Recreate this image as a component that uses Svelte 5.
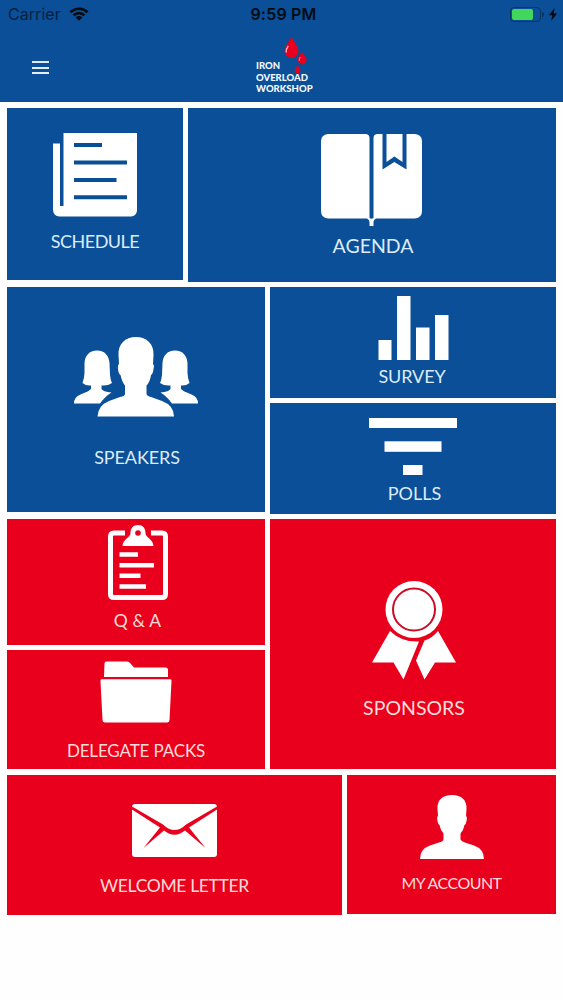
<script lang="ts">
  let carrier = 'Carrier';
  let time = '9:59 PM';
  let battery = 78;
</script>

<div class="screen">
  <header>
    <div class="status">
      <div class="carrier">
        <span>{carrier}</span>
        <svg width="20" height="14" viewBox="0 0 20 14" fill="none" stroke="#050b12" stroke-width="2.6">
          <path d="M1.4 5.2A12.4 12.4 0 0 1 18.6 5.2" />
          <path d="M4.6 8.3A7.8 7.8 0 0 1 15.4 8.3" />
          <path d="M10 13.8L6.6 10.4A4.9 4.9 0 0 1 13.4 10.4Z" fill="#050b12" stroke="none" />
        </svg>
      </div>
      <div class="time">{time}</div>
      <div class="power">
        <div class="battery"><div class="level" style="width: {battery}%"></div></div>
        <div class="cap"></div>
        <svg width="8" height="13" viewBox="0 0 8 13">
          <path d="M5.6 0L0 7.2h3.3L2.2 13L8 5.4H4.7Z" fill="#050b12" />
        </svg>
      </div>
    </div>

    <div class="nav">
      <button class="menu" aria-label="Menu">
        <span></span>
        <span></span>
        <span></span>
      </button>
      <div class="logo">
        <svg width="24" height="38" viewBox="0 0 24 38">
          <g fill="#e6001f">
            <path d="M8.500 0C9.500 4.500 15.500 10 15.500 15A7 7 0 0 1 1.500 15C1.500 10 7.500 4.500 8.500 0Z" />
            <path d="M18.800 15.500C19.600 18 23.600 20 23.600 24A4.400 4.400 0 0 1 14.800 24C14.800 20.500 18.200 18 18.800 15.500Z" />
            <path d="M14.500 28.500C15 30.500 17.400 32 17.400 34.300A2.800 2.800 0 0 1 11.800 34.300C11.800 32 14.200 30.500 14.500 28.500Z" />
          </g>
          <path d="M5 10.500Q2.900 13.200 3.200 16" fill="none" stroke="#ffb9bd" stroke-width="1.300" stroke-linecap="round" />
          <path d="M17 21.500Q16.100 23 16.300 24.600" fill="none" stroke="#ff9ba2" stroke-width="0.900" stroke-linecap="round" />
        </svg>
        <p>IRON<br />OVERLOAD<br />WORKSHOP</p>
      </div>
    </div>
  </header>

  <main>
    <div class="row first">
      <a class="tile schedule" href="#schedule">
        <svg width="84" height="84" viewBox="0 0 84 84">
          <path d="M10.500 0H84V77.500Q83.500 83 78 83.500H6.500Q0.500 83 0 77V10.500H7V73H10.500Z" fill="#fff" />
          <path d="M21 12H49M21 29.500H74M21 47H63.500M21 64.300H74" stroke="#0a4f96" stroke-width="4" />
        </svg>
        <span>SCHEDULE</span>
      </a>
      <a class="tile agenda" href="#agenda">
        <svg width="101" height="92" viewBox="0 0 101 92" fill="#fff">
          <path d="M7 0H45Q48.500 0.500 48.500 4V84Q50.500 85.500 52.500 84V4Q52.500 0.500 56 0H61.500V35.500L73.300 28L85.500 35.500V0H94Q101 1 101 7V77Q101 84 94 84.500H55Q52.500 85.500 52.500 88V92H48.500V88Q48.500 85.500 46 84.500H7Q0 84 0 77V7Q0 1 7 0Z" />
          <path d="M65.500 0H81.500V28L73.400 22.500L65.500 28Z" />
        </svg>
        <span>AGENDA</span>
      </a>
    </div>

    <div class="row second">
      <a class="tile speakers" href="#speakers">
        <svg width="124" height="80" viewBox="0 0 124 80" fill="#fff">
          <path d="M62 0C73 0 80 7 79.500 18L79 27Q80.500 28 79.500 32Q79 37 77 38Q76 45 72.500 48.500V57Q73 59 77 60L88 64Q100 68.500 100 79.500H23.500Q24 68.500 35 64L46 60Q51 59 51 57V48.500Q48 45 46.500 38Q44.500 37 44 32Q43.500 28 45 27L44.500 18C44 7 51 0 62 0Z" />
          <g id="side">
            <path d="M23 13.500C31 13.500 35 19 35.500 26L36 38Q36.500 43 38 46Q34 49 27.500 48.500V52Q29 54.500 37.500 55.500Q31 59.500 26 66.500H0Q0 60 6.500 57.500Q15.500 54 17 52V48.500Q12 49 8.500 46Q10.300 41 10.500 36V26C11 19 15 13.500 23 13.500Z" />
          </g>
          <use href="#side" transform="translate(124 0) scale(-1 1)" />
        </svg>
        <span>SPEAKERS</span>
      </a>
      <div class="stack">
        <a class="tile survey" href="#survey">
          <svg width="71" height="64" viewBox="0 0 71 64" fill="#fff">
            <rect x="0.500" y="44" width="13" height="20" />
            <rect x="19" y="0" width="13.500" height="64" />
            <rect x="38" y="31.500" width="13.500" height="32.500" />
            <rect x="57" y="19" width="13.500" height="45" />
          </svg>
          <span>SURVEY</span>
        </a>
        <a class="tile polls" href="#polls">
          <svg width="88" height="57" viewBox="0 0 88 57" fill="#fff">
            <rect x="0" y="0" width="88" height="10" />
            <rect x="15.500" y="23.300" width="57" height="10.500" />
            <rect x="34" y="47" width="19.500" height="10" />
          </svg>
          <span>POLLS</span>
        </a>
      </div>
    </div>

    <div class="row third">
      <div class="stack">
        <a class="tile questions" href="#questions">
          <svg width="60" height="75" viewBox="0 0 60 75">
            <path d="M17 8H6Q2.500 8 2.500 11.500V69Q2.500 72.500 6 72.500H54Q57.500 72.500 57.500 69V11.500Q57.500 8 54 8H43" fill="none" stroke="#fff" stroke-width="5" />
            <path d="M30 0C35 0 37.500 3.500 37.500 8C37.500 13 45 13.500 45.500 21H14.500C15 13.500 22.500 13 22.500 8C22.500 3.500 25 0 30 0Z" fill="#fff" />
            <circle cx="30" cy="8" r="2.800" fill="#e9001d" />
            <path d="M11.500 29.500H30M11.500 40.200H46M11.500 50.800H32.500M11.500 61.500H38" stroke="#fff" stroke-width="4.600" />
          </svg>
          <span>Q &amp; A</span>
        </a>
        <a class="tile packs" href="#packs">
          <svg width="72" height="62" viewBox="0 0 72 62" fill="#fff">
            <path d="M6.500 0.500H27Q29 0.500 30 2L34 6.500H66Q68 6.500 68 9V16H4L4.500 2.500Q4.500 0.500 6.500 0.500Z" />
            <path d="M1.500 18.300H70.500Q71.700 18.300 71.500 20L69.500 59Q69.300 61.500 67 61.500H5Q2.700 61.500 2.500 59L0.500 20Q0.300 18.300 1.500 18.300Z" />
          </svg>
          <span>DELEGATE PACKS</span>
        </a>
      </div>
      <a class="tile sponsors" href="#sponsors">
        <svg width="84" height="99" viewBox="0 0 84 99" fill="#fff">
          <path d="M18 50Q30 61.500 47 60.500L31.500 98.500L21.500 81.500H0Z" />
          <path d="M52.500 59.500Q60 57.500 66 50L84 81.500H63L52.500 98.500L44 79.500Z" />
          <circle cx="42" cy="28.500" r="28.500" />
          <circle cx="42" cy="28.500" r="21" fill="none" stroke="#d00a25" stroke-width="2" />
        </svg>
        <span>SPONSORS</span>
      </a>
    </div>

    <div class="row fourth">
      <a class="tile welcome" href="#welcome">
        <svg width="85" height="53" viewBox="0 0 85 53">
          <rect width="85" height="53" rx="3" fill="#fff" />
          <path d="M0 2.500L31 20.500Q42.500 31.500 54 20.500L85 2.500V5.500L57 23.500L73.500 44L53 26.500Q42.500 35 32 26.500L11.500 44L28 23.500L0 5.500Z" fill="#e9001d" />
        </svg>
        <span>WELCOME LETTER</span>
      </a>
      <a class="tile account" href="#account">
        <svg width="64" height="64" viewBox="0 0 64 64" fill="#fff">
          <path d="M32 0C41.500 0 47 5 46.500 14L46 21Q47.500 22 46.500 26Q46 29.500 44.500 30Q43.500 35.500 40.500 38.500V44.500Q41.500 46.500 45 47.500L54 50.500Q64 54 64 64H0Q0 54 10 50.500L19 47.500Q23 46.500 23.500 44.500V38.500Q20.500 35.500 19.500 30Q18 29.500 17.500 26Q16.500 22 18 21L17.500 14C17 5 22.500 0 32 0Z" />
        </svg>
        <span>MY ACCOUNT</span>
      </a>
    </div>
  </main>
</div>

<style>
  :global(body) {
    background: #fff;
  }

  .screen {
    width: 563px;
    height: 1000px;
    overflow: hidden;
    background: #fefefe;
  }

  header {
    height: 101.5px;
    background: #0a4f97;
  }

  .status {
    display: grid;
    grid-template-columns: 1fr auto 1fr;
    align-items: center;
    height: 28px;
    padding: 0 6px 0 8px;
    font-family: Inter, 'Liberation Sans', sans-serif;
    color: #050b12;
  }

  .carrier {
    display: flex;
    align-items: center;
    gap: 8px;
    font-size: 16px;
    letter-spacing: 0.05px;
    color: #07203d;
  }

  .time {
    padding-left: 2px;
    font-size: 16px;
    font-weight: 600;
    letter-spacing: 0.2px;
  }

  .power {
    display: flex;
    align-items: center;
    justify-content: flex-end;
  }

  .battery {
    box-sizing: border-box;
    width: 31px;
    height: 15px;
    padding: 1px;
    border: 1px solid #083565;
    border-radius: 4px;
  }

  .level {
    height: 100%;
    border-radius: 2px;
    background: #42d65b;
  }

  .cap {
    width: 2px;
    height: 5px;
    margin: 0 5px 0 1px;
    border-radius: 0 2px 2px 0;
    background: #083565;
  }

  .nav {
    display: grid;
    grid-template-columns: 256px 1fr;
    height: 73px;
  }

  .menu {
    display: flex;
    flex-direction: column;
    align-self: start;
    gap: 3.5px;
    width: 17px;
    margin: 33px 0 0 32px;
    padding: 0;
    border: 0;
    background: none;
  }

  .menu span {
    height: 2px;
    background: #e3edf7;
  }

  .logo {
    padding-top: 8px;
  }

  .logo svg {
    display: block;
    margin-left: 27px;
  }

  .logo p {
    margin: -14px 0 0;
    font-family: Lato, sans-serif;
    font-size: 9.5px;
    font-weight: 900;
    line-height: 11.5px;
    color: #f4f8fd;
  }

  main {
    display: flex;
    flex-direction: column;
    gap: 5.5px;
    padding: 6px 7px 0;
  }

  .row {
    display: flex;
    gap: 5px;
  }

  .stack {
    display: flex;
    flex-direction: column;
    gap: 4.5px;
  }

  .tile {
    box-sizing: border-box;
    display: flex;
    flex-direction: column;
    align-items: center;
    background: #0a4f97;
    color: #dcecfb;
    font-family: Lato, sans-serif;
    font-size: 18px;
    line-height: 20px;
    text-decoration: none;
    white-space: nowrap;
  }

  .tile svg {
    display: block;
    flex: none;
  }

  .third .tile,
  .fourth .tile {
    background: #e9001d;
    color: #ffdcd8;
  }

  .first {
    height: 174px;
  }

  .schedule {
    width: 176px;
    height: 172.5px;
    padding-top: 25.5px;
    letter-spacing: -0.5px;
  }

  .schedule span {
    margin-top: 14px;
  }

  .agenda {
    flex: 1;
    padding-top: 26.5px;
    font-size: 19.5px;
  }

  .agenda svg {
    margin-right: 1px;
  }

  .agenda span {
    margin: 10px 0 0 2px;
  }

  .second {
    height: 226.5px;
  }

  .speakers {
    width: 258px;
    height: 225px;
    padding-top: 50px;
    letter-spacing: -0.1px;
  }

  .speakers span {
    margin: 30px 0 0 2px;
  }

  .second .stack,
  .sponsors {
    flex: 1;
  }

  .survey {
    height: 111px;
    padding-top: 9px;
    letter-spacing: -0.1px;
  }

  .survey svg {
    margin-left: 1px;
  }

  .survey span {
    margin: 6px 2px 0 0;
  }

  .polls {
    height: 111px;
    padding-top: 15.5px;
  }

  .polls span {
    margin: 8px 0 0 3px;
  }

  .third .stack {
    width: 258px;
  }

  .questions {
    height: 126px;
    padding-top: 6px;
    font-size: 17.5px;
  }

  .questions span {
    margin: 11px 0 0 3px;
    letter-spacing: 0.2px;
  }

  .questions svg {
    margin-left: 3px;
  }

  .packs {
    height: 119.5px;
    padding-top: 11.5px;
    font-size: 17px;
    letter-spacing: -0.15px;
  }

  .packs span {
    margin-top: 17.5px;
  }

  .sponsors {
    padding-top: 62px;
    font-size: 19.5px;
  }

  .sponsors svg {
    margin-left: 1px;
  }

  .sponsors span {
    margin: 17.5px 0 0 2px;
  }

  .welcome {
    width: 335px;
    height: 140.5px;
    padding-top: 29.5px;
    font-size: 17.5px;
    letter-spacing: -0.35px;
  }

  .welcome span {
    margin-top: 19px;
  }

  .account {
    flex: 1;
    height: 139px;
    padding-top: 20px;
    font-size: 16px;
    letter-spacing: -0.55px;
  }

  .account span {
    margin-top: 14px;
  }
</style>
